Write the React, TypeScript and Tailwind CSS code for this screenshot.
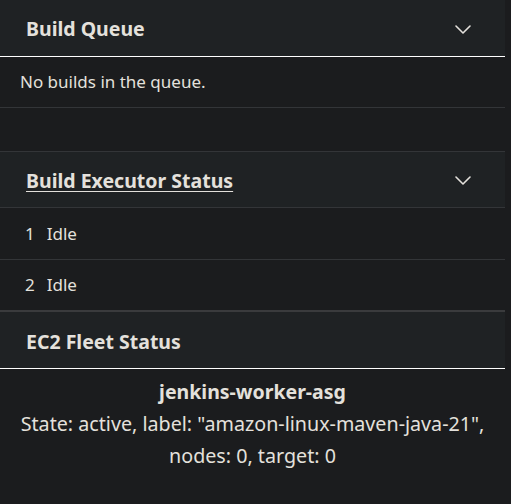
import React from 'react';

const Chevron: React.FC = () => (
  <svg width="16" height="9" viewBox="0 0 16 9" fill="none" className="text-[#e4e1dc]">
    <path d="M1 1l7 7 7-7" stroke="currentColor" strokeWidth="1.6" strokeLinecap="round" strokeLinejoin="round" />
  </svg>
);

const App: React.FC = () => {
  return (
    <div className="min-h-[504px] w-[511px] bg-[#1b1c1e] text-[#e4e1dc] font-['Noto_Sans',sans-serif]">
      <div className="w-[505px]">
        {/* Build Queue */}
        <div className="h-[57px] bg-[#1f2224] border-b border-white pt-[2px] pl-[26px] pr-[34px] flex items-center justify-between">
          <h2 className="text-[19.5px] font-bold">Build Queue</h2>
          <Chevron />
        </div>
        <div className="h-[51px] border-b border-[#333538] pl-[20px] flex items-center text-[17px]">
          No builds in the queue.
        </div>

        <div className="h-[43px]" />

        {/* Build Executor Status */}
        <div className="border-t border-[#333538]">
          <div className="h-[56px] bg-[#1f2224] border-b border-[#333538] pt-[2px] pl-[26px] pr-[34px] flex items-center justify-between">
            <a href="#" className="text-[19.5px] font-bold underline underline-offset-[3px] decoration-1">Build Executor Status</a>
            <Chevron />
          </div>
          {[1, 2].map((n) => (
            <div key={n} className="h-[52px] border-b border-[#333538] pl-[25px] flex items-center gap-[12px] text-[17px] last:border-b-2 last:border-[#3a3b3d]">
              <span>{n}</span>
              <span>Idle</span>
            </div>
          ))}
        </div>

        {/* EC2 Fleet Status */}
        <div className="h-[57px] bg-[#1f2224] border-b border-white pt-[3px] pl-[26px] flex items-center">
          <h2 className="text-[19.5px] font-bold">EC2 Fleet Status</h2>
        </div>
        <div className="pt-[7px] text-center text-[19.7px] leading-[32px]">
          <div className="font-bold text-[19.5px]">jenkins-worker-asg</div>
          <div>State: active, label: "amazon-linux-maven-java-21",<br />nodes: 0, target: 0</div>
        </div>
      </div>
    </div>
  );
};

export default App;
